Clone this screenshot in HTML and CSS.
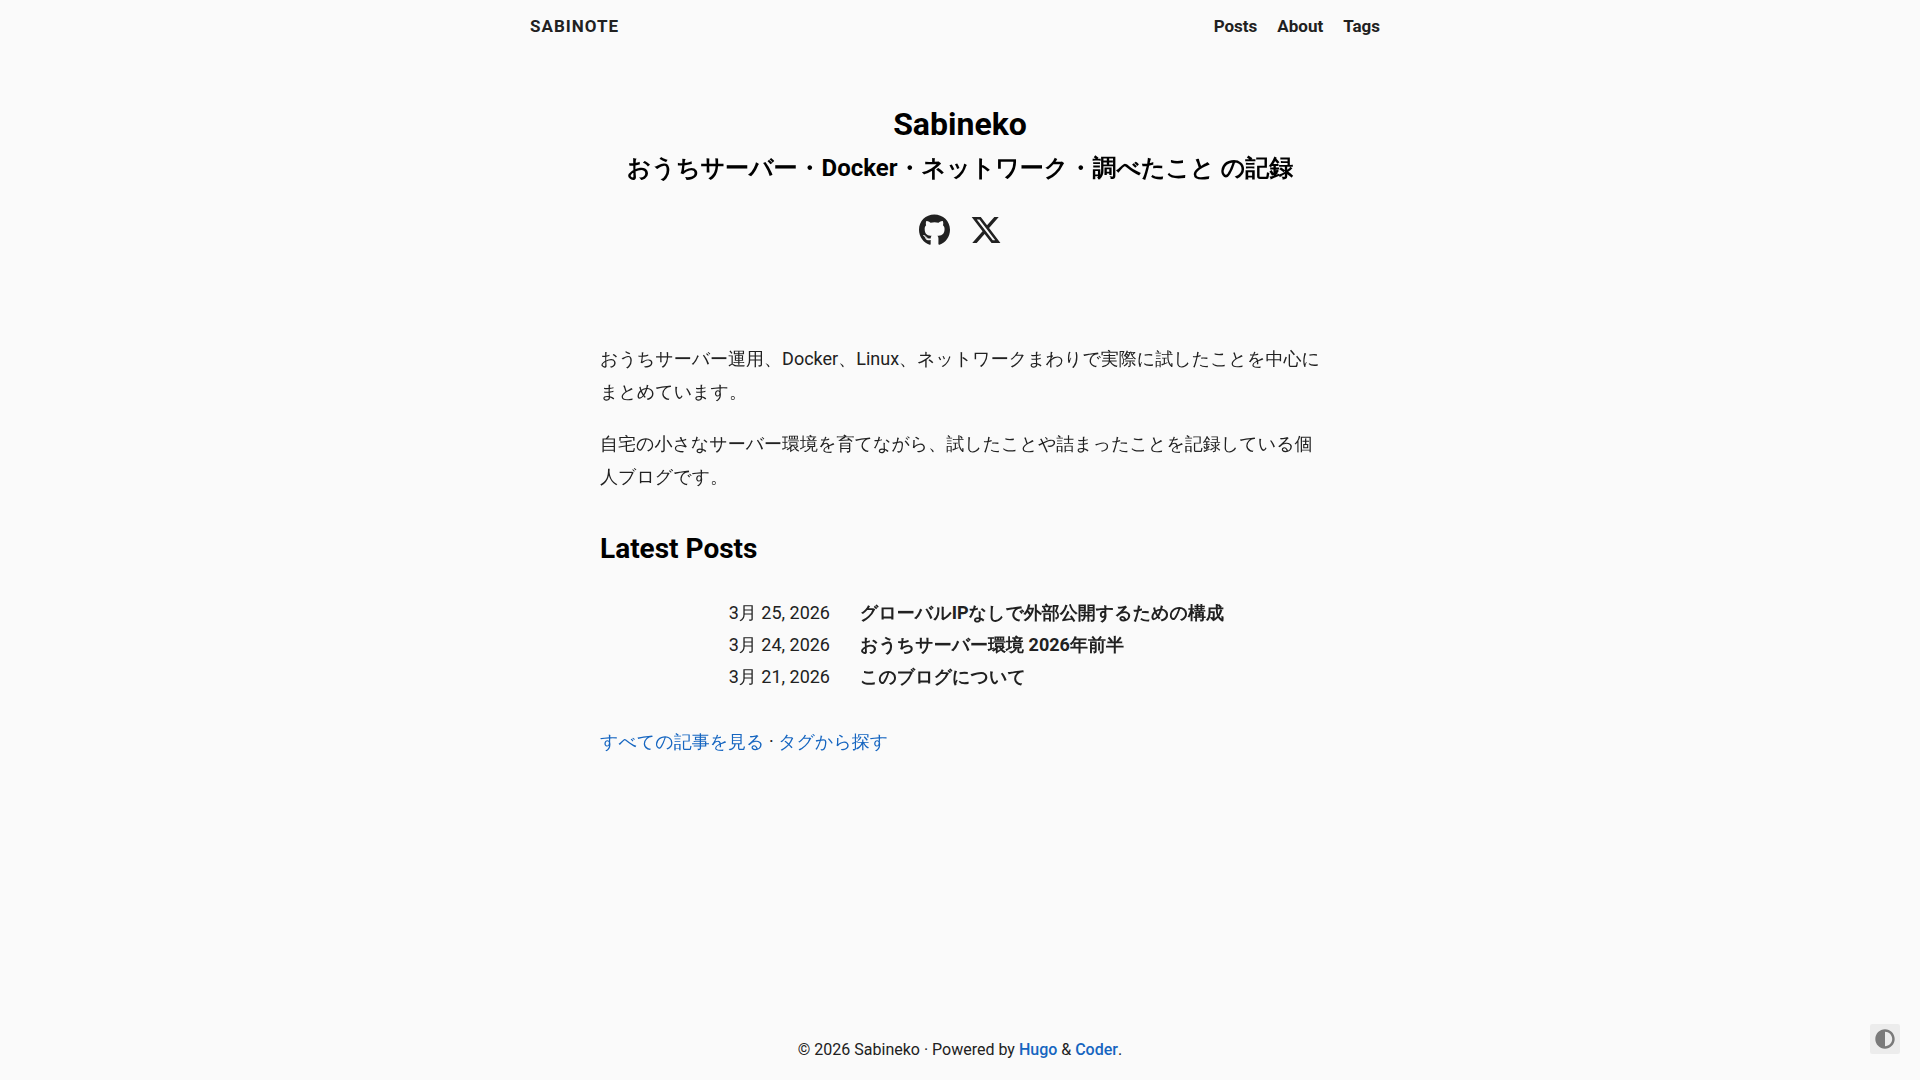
FILE: index.html
```html
<!DOCTYPE html>
<html lang="ja">
<head>
<meta charset="utf-8">
<meta name="viewport" content="width=device-width, initial-scale=1">
<title>Sabinote</title>
<link rel="stylesheet" href="styles.css">
</head>
<body>
<div class="page">
  <header class="site-header">
    <nav class="navigation">
      <a class="navigation-title" href="#">SABINOTE</a>
      <ul class="navigation-list">
        <li><a class="navigation-link" href="#">Posts</a></li>
        <li><a class="navigation-link" href="#">About</a></li>
        <li><a class="navigation-link" href="#">Tags</a></li>
      </ul>
    </nav>
  </header>

  <main class="content">
    <section class="about">
      <h1 class="about-name">Sabineko</h1>
      <h2 class="about-info">おうちサーバー・<span class="latin">Docker</span>・ネットワーク・調べたこと の記録</h2>
      <ul class="social">
        <li>
          <a class="social-link" href="#" aria-label="GitHub">
            <svg class="social-icon" viewBox="0 0 496 512" width="31" height="32" aria-hidden="true"><path d="M165.900 397.400c0 2-2.300 3.600-5.200 3.600-3.300.3-5.600-1.300-5.600-3.600 0-2 2.300-3.600 5.200-3.600 3-.3 5.600 1.300 5.600 3.600zm-31.100-4.500c-.7 2 1.300 4.300 4.300 4.900 2.600 1 5.600 0 6.200-2s-1.300-4.300-4.300-5.200c-2.600-.7-5.500.3-6.200 2.300zm44.200-1.700c-2.900.7-4.900 2.600-4.600 4.900.3 2 2.900 3.300 5.900 2.600 2.900-.7 4.900-2.600 4.600-4.600-.3-1.900-3-3.200-5.900-2.900zM244.800 8C106.100 8 0 113.300 0 252c0 110.900 69.800 205.800 169.500 239.200 12.800 2.300 17.300-5.600 17.300-12.100 0-6.200-.3-40.400-.3-61.400 0 0-70 15-84.700-29.800 0 0-11.400-29.100-27.800-36.600 0 0-22.900-15.700 1.600-15.400 0 0 24.900 2 38.600 25.800 21.900 38.600 58.600 27.500 72.900 20.900 2.300-16 8.800-27.100 16-33.700-55.900-6.200-112.300-14.300-112.300-110.500 0-27.500 7.600-41.300 23.600-58.900-2.600-6.500-11.100-33.300 2.600-67.900 20.900-6.500 69 27 69 27 20-5.600 41.500-8.500 62.800-8.500s42.800 2.900 62.800 8.500c0 0 48.100-33.600 69-27 13.700 34.700 5.200 61.400 2.600 67.900 16 17.700 25.800 31.500 25.800 58.900 0 96.500-58.900 104.200-114.800 110.500 9.200 7.900 17 22.900 17 46.400 0 33.700-.3 75.400-.3 83.600 0 6.500 4.600 14.400 17.300 12.100C428.200 457.800 496 362.900 496 252 496 113.300 383.500 8 244.800 8zM97.200 352.900c-1.300 1-1 3.300.7 5.200 1.600 1.600 3.900 2.300 5.200 1 1.300-1 1-3.300-.7-5.200-1.600-1.600-3.900-2.300-5.200-1zm-10.800-8.100c-.7 1.300.3 2.900 2.300 3.900 1.600 1 3.600.7 4.300-.7.7-1.300-.3-2.900-2.300-3.900-2-.6-3.600-.3-4.300.7zm32.400 35.600c-1.600 1.300-1 4.300 1.300 6.200 2.300 2.300 5.200 2.600 6.500 1 1.300-1.300.7-4.300-1.300-6.200-2.200-2.300-5.200-2.600-6.500-1zm-11.400-14.700c-1.600 1-1.600 3.600 0 5.900 1.600 2.300 4.300 3.300 5.600 2.300 1.600-1.300 1.600-3.900 0-6.200-1.400-2.300-4-3.300-5.600-2z"/></svg>
          </a>
        </li>
        <li>
          <a class="social-link" href="#" aria-label="X">
            <svg class="social-icon" viewBox="0 0 512 512" width="32" height="32" aria-hidden="true"><path d="M389.200 48h70.600L305.600 224.200 487 464H345L233.700 318.600 106.500 464H35.800L200.700 275.500 26.800 48H172.400L272.900 180.900 389.200 48zM364.400 421.800h39.100L151.100 88h-42L364.400 421.800z"/></svg>
          </a>
        </li>
      </ul>
    </section>

    <section class="intro">
      <p>おうちサーバー運用、Docker、Linux、ネットワークまわりで実際に試したことを中心にまとめています。</p>
      <p>自宅の小さなサーバー環境を育てながら、試したことや詰まったことを記録している個人ブログです。</p>
      <h2 class="latest-title">Latest Posts</h2>
      <ul class="posts">
        <li class="post"><time class="post-date" datetime="2026-03-25">3月 25, 2026</time><a class="post-title" href="#">グローバル<span class="latin">IP</span>なしで外部公開するための構成</a></li>
        <li class="post"><time class="post-date" datetime="2026-03-24">3月 24, 2026</time><a class="post-title" href="#">おうちサーバー環境 <span class="latin">2026</span>年前半</a></li>
        <li class="post"><time class="post-date" datetime="2026-03-21">3月 21, 2026</time><a class="post-title" href="#">このブログについて</a></li>
      </ul>
      <p><a class="link" href="#">すべての記事を見る</a> · <a class="link" href="#">タグから探す</a></p>
    </section>
  </main>

  <footer class="footer">© 2026 Sabineko · Powered by <a class="footer-link" href="#">Hugo</a> &amp; <a class="footer-link" href="#">Coder</a>.</footer>
</div>

<button class="scheme-toggle" type="button" aria-label="Toggle color scheme">
  <svg class="scheme-icon" viewBox="0 0 512 512" width="20" height="20" aria-hidden="true"><path d="M8 256c0 136.966 111.033 248 248 248s248-111.034 248-248S392.966 8 256 8 8 119.033 8 256zm248 184V72c101.705 0 184 82.311 184 184 0 101.705-82.311 184-184 184z"/></svg>
</button>
</body>
</html>
```
FILE: styles.css
```css
* {
  box-sizing: border-box;
}

body {
  margin: 0;
  background: #fafafa;
  color: #212121;
  font-family: Roboto, "WenQuanYi Zen Hei", "Noto Sans CJK JP", sans-serif;
  font-size: 18px;
  line-height: 33px;
}

h1,
h2,
p,
ul {
  margin: 0;
  padding: 0;
}

ul {
  list-style: none;
}

a {
  color: inherit;
  text-decoration: none;
}

.page {
  display: flex;
  flex-direction: column;
  min-height: 100vh;
}

.site-header {
  padding: 10px 20px;
}

.navigation {
  display: flex;
  align-items: center;
  justify-content: space-between;
  max-width: 860px;
  margin: 0 auto;
  padding-right: 10px;
  font-size: 17px;
  font-weight: 700;
}

.navigation-title {
  letter-spacing: 1px;
}

.navigation-list {
  display: flex;
  gap: 20px;
}

.content {
  flex: 1;
  padding: 0 20px;
}

.about {
  display: flex;
  flex-direction: column;
  align-items: center;
  padding-top: 49px;
  color: #000;
  text-align: center;
}

.about-name {
  font-size: 32px;
  line-height: 44px;
}

.about-info {
  font-size: 24px;
  font-weight: 800;
  line-height: 44px;
}

/* Latin runs inside heavy Japanese text keep the regular bold */
.latin {
  font-weight: 700;
}

.social {
  display: flex;
  gap: 20px;
  margin-top: 24px;
}

.social-link {
  display: block;
  color: #212121;
}

.social-icon {
  display: block;
  fill: currentColor;
}

.intro {
  display: flex;
  flex-direction: column;
  gap: 19px;
  max-width: 720px;
  margin: 0 auto;
  padding-top: 96px;
}

.latest-title {
  margin-top: 18px;
  color: #000;
  font-size: 28px;
  line-height: 37px;
}

.posts {
  padding: 11px 0 13px;
  line-height: 32px;
}

.post {
  display: grid;
  grid-template-columns: 230px 1fr;
  gap: 30px;
}

.post-date {
  text-align: right;
}

.post-title {
  font-weight: 800;
}

.link {
  color: #1565c0;
}

.footer {
  padding: 14px 20px;
  font-size: 16px;
  text-align: center;
}

.footer-link {
  color: #1565c0;
  font-weight: 500;
}

.scheme-toggle {
  position: fixed;
  right: 20px;
  bottom: 26px;
  display: flex;
  align-items: center;
  justify-content: center;
  width: 30px;
  height: 30px;
  padding: 0;
  border: 0;
  border-radius: 2px;
  background: #ececec;
  color: #7a7a7a;
  cursor: pointer;
}

.scheme-icon {
  fill: currentColor;
}
```
